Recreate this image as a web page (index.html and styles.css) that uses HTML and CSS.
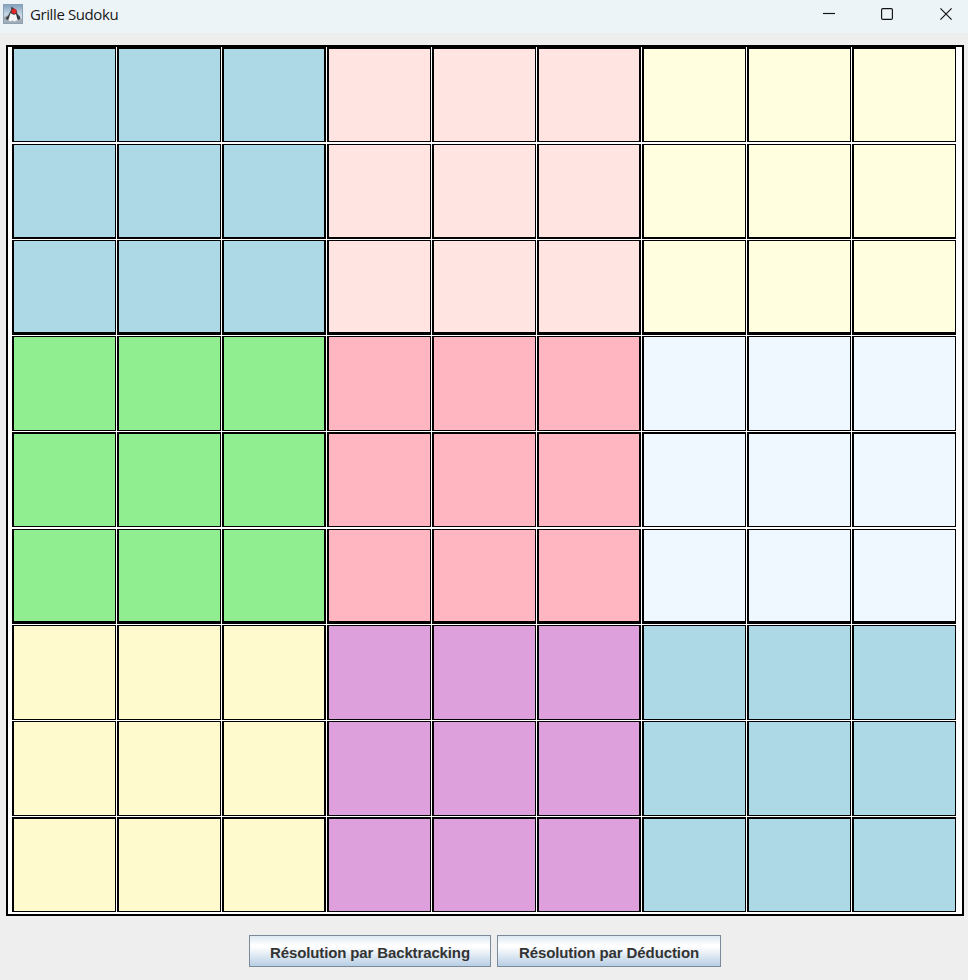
FILE: index.html
```html
<!DOCTYPE html>
<html lang="fr">
<head>
<meta charset="utf-8">
<title>Grille Sudoku</title>
<link rel="stylesheet" href="styles.css">
</head>
<body>
<header class="titlebar">
  <svg class="app-icon" width="20" height="20" viewBox="0 0 20 20">
    <defs><linearGradient id="sky" x1="0" y1="0" x2="0" y2="1"><stop offset="0" stop-color="#7f9fbd"/><stop offset=".5" stop-color="#c5d5e2"/><stop offset="1" stop-color="#dfe7ee"/></linearGradient></defs>
    <rect x=".5" y=".5" width="19" height="19" fill="url(#sky)" stroke="#8ca0b3"/>
    <path d="M1 13l4-2 3 2 6-2 5 4v4H1z" fill="#a3adb5"/>
    <path d="M8.5 2.5l2 1.5 3 2 1 4 2.5 2.5v2.500l-2 1-1.500-2-6-2-1 3-2.500 1-1.500-2 2.500-2 1.500-3 1.500-3z" fill="#3a3e44"/>
    <path d="M7.500 9q3 3 5.500 1l1.500 6-3 1.500-2-1-3 1-1-2z" fill="#f2f4f6"/>
    <circle cx="11" cy="7.2" r="2.5" fill="#e52525"/>
  </svg>
  <span class="title">Grille Sudoku</span>
  <div class="controls">
    <svg width="12" height="12" viewBox="0 0 12 12"><path d="M0 5.5h12"/></svg>
    <svg width="12" height="12" viewBox="0 0 12 12"><rect x=".6" y=".6" width="10.8" height="10.8" rx="1.2"/></svg>
    <svg class="close" width="12" height="12" viewBox="0 0 12 12"><path d="M.4.4l11.2 11.2M11.6.4L.4 11.6"/></svg>
  </div>
</header>
<main class="board" id="board"></main>
<footer class="actions">
  <button class="backtracking">Résolution par Backtracking</button>
  <button class="deduction">Résolution par Déduction</button>
</footer>
<script src="grid.js"></script>
</body>
</html>
```
FILE: styles.css
```css
* { box-sizing: border-box; }
body { margin: 0; width: 968px; height: 980px; background: #eee; overflow: hidden; }
.titlebar { display: flex; align-items: center; height: 33px; padding: 0 16px 5px 3px; background: #ecf4f8; }
.app-icon { display: block; }
.title { margin-left: 7px; font: 15px/20px "Open Sans", "Noto Sans", sans-serif; letter-spacing: -.4px; color: #191919; }
.controls { display: flex; gap: 46px; margin-left: auto; }
.controls svg { display: block; fill: none; stroke: #111; stroke-width: 1.15; }
.controls .close { margin-left: 1px; }
.board {
  display: grid;
  grid-template-columns: repeat(9, 104px);
  grid-template-rows: 97px 96px 96px 96px 97px 96px 96px 96px 95px;
  column-gap: 1px;
  width: 958px;
  height: 871px;
  margin: 12px 0 0 6px;
  padding-left: 4px;
  border: 2px solid #000;
  background: #fff;
}
.cell { border: 1px solid #000; border-left-width: 2px; margin-bottom: 1px; }
.row-0 { border-top-width: 2px; margin-bottom: 2px; }
.row-1 { border-bottom-width: 2px; }
.row-2 { border-bottom-width: 3px; }
.row-4 { border-top-width: 2px; margin-bottom: 2px; }
.row-5 { border-bottom-width: 3px; }
.row-8 { border-top-width: 2px; margin-bottom: 0; }
.block-end { border-right-width: 2px; }
.zone-0, .zone-8 { background: #add8e6; }
.zone-1 { background: #ffe4e1; }
.zone-2 { background: #ffffe0; }
.zone-3 { background: #90ee90; }
.zone-4 { background: #ffb6c1; }
.zone-5 { background: #f0f8ff; }
.zone-6 { background: #fffacd; }
.zone-7 { background: #dda0dd; }
.actions { display: flex; justify-content: center; gap: 6px; margin-top: 19px; padding-left: 2px; }
.actions button {
  height: 32px;
  padding: 3px 0 0;
  border: 1px solid #7a8a99;
  background: linear-gradient(#dde8f3 0%, #fff 30%, #fff 36%, #b8cfe5 100%);
  font: bold 15px "Liberation Sans", Arial, sans-serif;
  letter-spacing: -.13px;
  color: #333;
}
.actions .backtracking { width: 242px; }
.actions .deduction { width: 224px; letter-spacing: -.1px; }
```
FILE: grid.js
```js
const board = document.getElementById("board");
for (let row = 0; row < 9; row++) {
  for (let col = 0; col < 9; col++) {
    const zone = Math.floor(row / 3) * 3 + Math.floor(col / 3);
    const cell = document.createElement("div");
    cell.className = `cell row-${row} zone-${zone}`;
    if (col === 2 || col === 5) cell.classList.add("block-end");
    board.appendChild(cell);
  }
}
```
